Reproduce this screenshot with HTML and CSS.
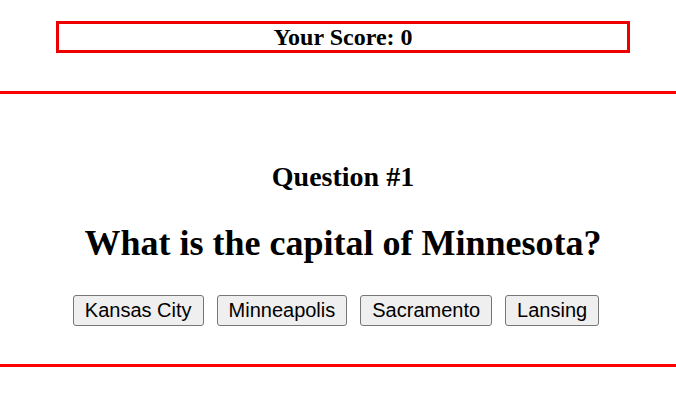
FILE: index.html
```html
<!DOCTYPE html>
<html>
<head>
<meta charset="utf-8">
<link rel="stylesheet" href="styles.css">
</head>
<body>
<header class="top">
  <div class="score">Your Score: 0</div>
</header>
<main class="quiz">
  <h2 class="qnum">Question #1</h2>
  <h1 class="qtext">What is the capital of Minnesota?</h1>
  <div class="answers">
    <button class="answer">Kansas City</button>
    <button class="answer">Minneapolis</button>
    <button class="answer">Sacramento</button>
    <button class="answer">Lansing</button>
  </div>
</main>
</body>
</html>
```

FILE: styles.css
```css
html, body {
  margin: 0;
  padding: 0;
  background: #fff;
}
body {
  font-family: "Liberation Serif", "Times New Roman", serif;
  color: #000;
  width: 676px;
}
.top {
  padding-top: 21px;
  height: 70px;
  border-bottom: 3px solid #ff0000;
}
.score {
  margin-left: 56px;
  width: 568px;
  height: 26px;
  border: 3px solid #ee0000;
  font-size: 24px;
  font-weight: bold;
  line-height: 26px;
  text-align: center;
}
.quiz {
  border-bottom: 3px solid #ff0000;
  box-sizing: border-box;
  height: 273px;
  padding-top: 67px;
  display: flex;
  flex-direction: column;
  align-items: center;
}
.qnum {
  margin: 0;
  padding-left: 10px;
  font-size: 28px;
  line-height: 32px;
  font-weight: bold;
}
.qtext {
  margin: 29px 0 0;
  padding-left: 10px;
  font-size: 36px;
  line-height: 42px;
  font-weight: bold;
}
.answers {
  margin-top: 31px;
  padding-right: 4px;
  display: flex;
  gap: 13px;
}
.answer {
  font-family: "Liberation Sans", Arial, sans-serif;
  font-size: 20px;
  line-height: 23px;
  padding: 3px 11px;
  margin: 0;
  border: 1px solid #767676;
  border-radius: 3px;
  background: #efefef;
  color: #000;
}
```
